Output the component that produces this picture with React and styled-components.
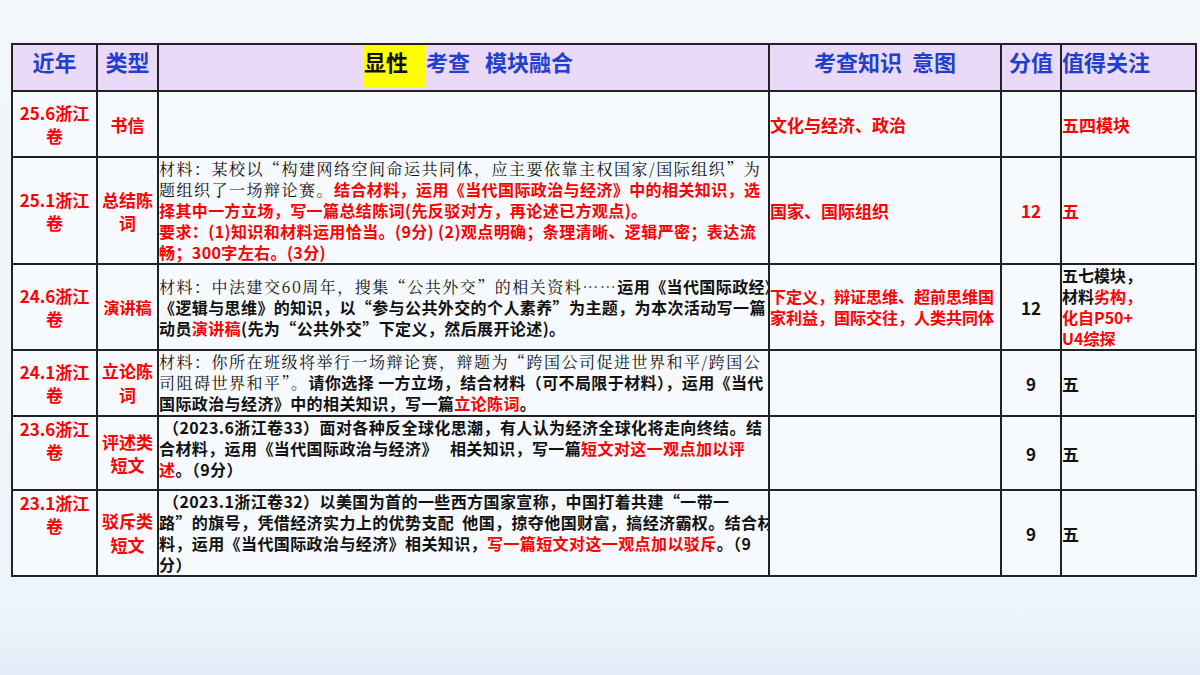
import React from "react";
import styled, { createGlobalStyle } from "styled-components";

const G = createGlobalStyle`
  html,body{margin:0;padding:0;}
  body{width:1200px;height:675px;overflow:hidden;background:linear-gradient(180deg,#f3f7fc 0%,#eef4fb 90%,#e2ecf8 100%);font-family:"Noto Sans CJK SC","Noto Sans",sans-serif;}
`;
const Page = styled.div`padding:43px 5px 0 11px;`;
const Table = styled.table`
  border-collapse:collapse;table-layout:fixed;width:1184px;
  td,th{border:2px solid #222;padding:0;}
`;
const Th = styled.th`
  height:43px;background:#ead9f8;color:#1f3fcf;font-size:22px;font-weight:700;
  text-align:${p=>p.$align||"center"};vertical-align:top;line-height:28px;padding-top:2px!important;
`;
const Hl = styled.span`background:#ffff00;color:#111;padding:0 18px 10px 0;`;
const Td = styled.td`
  background:#f6f9fd;color:${p=>p.$c||"#f00"};font-weight:700;font-size:${p=>p.$fs||17}px;
  text-align:${p=>p.$align||"center"};vertical-align:${p=>p.$v||"middle"};line-height:${p=>p.$lh||23}px;
  height:${p=>p.$h}px;overflow:hidden;
`;
const Mat = styled.div`font-size:16px;line-height:21px;color:#111;font-weight:700;text-align:left;letter-spacing:0.4px;margin-right:-6px;`;
const S = styled.span`font-family:"Noto Serif CJK SC","Noto Sans CJK SC",serif;font-weight:400;letter-spacing:1.5px;`;
const R = styled.span`color:#f00;`;

export default function App(){
  return <><G/><Page><Table>
    <colgroup><col style={{width:85}}/><col style={{width:61}}/><col style={{width:611}}/><col style={{width:232}}/><col style={{width:60}}/><col style={{width:135}}/></colgroup>
    <thead><tr>
      <Th>近年</Th><Th>类型</Th>
      <Th><span style={{marginLeft:10}}/><Hl>显性</Hl>考查&nbsp;&nbsp;&nbsp;模块融合</Th>
      <Th>考查知识&nbsp;&nbsp;意图</Th><Th>分值</Th><Th $align="left">值得关注</Th>
    </tr></thead>
    <tbody>
      <tr><Td $h={64}>25.6浙江<br/>卷</Td><Td>书信</Td><Td/><Td $align="left">文化与经济、政治</Td><Td/><Td $align="left">五四模块</Td></tr>
      <tr><Td $h={102}>25.1浙江<br/>卷</Td><Td>总结陈<br/>词</Td>
        <Td $v="top"><Mat><S>材料：某校以“构建网络空间命运共同体，应主要依靠主权国家/国际组织”为题组织了一场辩论赛。</S><R>结合材料，运用《当代国际政治与经济》中的相关知识，选择其中一方立场，写一篇总结陈词(先反驳对方，再论述已方观点)。<br/>要求：(1)知识和材料运用恰当。(9分) (2)观点明确；条理清晰、逻辑严密；表达流畅；300字左右。(3分)</R></Mat></Td>
        <Td $align="left">国家、国际组织</Td><Td>12</Td><Td $align="left">五</Td></tr>
      <tr><Td $h={81}>24.6浙江<br/>卷</Td><Td $fs={16}>演讲稿</Td>
        <Td><Mat><S>材料：中法建交60周年，搜集“公共外交”的相关资料……</S>运用《当代国际政经》《逻辑与思维》的知识，以“参与公共外交的个人素养”为主题，为本次活动写一篇动员<R>演讲稿</R>(先为“公共外交”下定义，然后展开论述)。</Mat></Td>
        <Td $align="left" $lh={21} $fs={16}>下定义，辩证思维、超前思维国家利益，国际交往，人类共同体</Td><Td $c="#111">12</Td>
        <Td $align="left" $c="#111" $lh={21} $fs={16}>五七模块，<br/>材料<R>劣构，<br/>化自P50+<br/>U4综探</R></Td></tr>
      <tr><Td $h={64}>24.1浙江<br/>卷</Td><Td $lh={24}>立论陈<br/>词</Td>
        <Td $v="top"><Mat><S>材料：你所在班级将举行一场辩论赛，辩题为“跨国公司促进世界和平/跨国公司阻碍世界和平”。</S>请你选择 一方立场，结合材料（可不局限于材料），运用《当代国际政治与经济》中的相关知识，写一篇<R>立论陈词</R>。</Mat></Td>
        <Td/><Td $c="#111">9</Td><Td $align="left" $c="#111">五</Td></tr>
      <tr><Td $h={72} $v="top">23.6浙江<br/>卷</Td><Td>评述类<br/>短文</Td>
        <Td $v="top"><Mat>&nbsp;（2023.6浙江卷33）面对各种反全球化思潮，有人认为经济全球化将走向终结。结合材料，运用《当代国际政治与经济》&nbsp;&nbsp;&nbsp;相关知识，写一篇<R>短文对这一观点加以评述</R>。（9分）</Mat></Td>
        <Td/><Td $c="#111">9</Td><Td $align="left" $c="#111">五</Td></tr>
      <tr><Td $h={81} $v="top">23.1浙江<br/>卷</Td><Td $lh={24}>驳斥类<br/>短文</Td>
        <Td $v="top"><Mat>&nbsp;（2023.1浙江卷32）以美国为首的一些西方国家宣称，中国打着共建“一带一路”的旗号，凭借经济实力上的优势支配&nbsp;&nbsp;他国，掠夺他国财富，搞经济霸权。结合材料，运用《当代国际政治与经济》相关知识，<R>写一篇短文对这一观点加以驳斥</R>。（9分）</Mat></Td>
        <Td/><Td $c="#111">9</Td><Td $align="left" $c="#111">五</Td></tr>
    </tbody>
  </Table></Page></>;
}
